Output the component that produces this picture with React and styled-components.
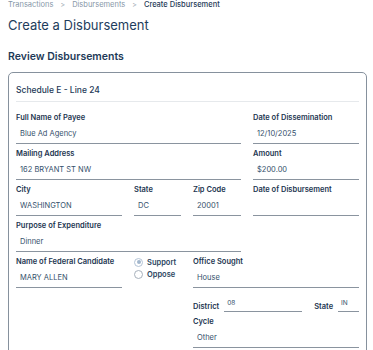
import React from "react";
import styled, { createGlobalStyle } from "styled-components";

const GlobalStyle = createGlobalStyle`
  body {
    margin: 0;
    background: #ffffff;
    font-family: Inter, "Noto Sans", sans-serif;
    color: #1c3550;
  }
`;

const Page = styled.div`
  padding: 0 6px 0 8px;
  height: 350px;
  overflow: hidden;
`;

const Crumbs = styled.nav`
  display: flex;
  align-items: center;
  font-size: 7.5px;
  line-height: 10px;
  color: #8797a8;
`;

const Crumb = styled.span`
  color: ${(p) => (p.$current ? "#1f3b58" : "#8797a8")};
  font-weight: ${(p) => (p.$current ? 500 : 400)};
`;

const Sep = styled.span`
  margin: 0 7px;
  font-size: 7px;
  color: #8d9aa8;
`;

const Title = styled.h1`
  margin: 7px 0 0;
  font-size: 13px;
  line-height: 16px;
  font-weight: 400;
  color: #1e3d5c;
`;

const SubTitle = styled.h2`
  margin: 17px 0 0;
  font-size: 10.5px;
  line-height: 14px;
  font-weight: 600;
  color: #1e3a57;
`;

const Card = styled.section`
  margin-top: 8px;
  border: 1px solid #86919d;
  border-radius: 5px;
  padding: 0 7px;
  height: 400px;
`;

const CardHead = styled.div`
  padding: 11px 0 5px;
  font-size: 8.5px;
  line-height: 12px;
  font-weight: 500;
  color: #1e3a57;
  border-bottom: 1px solid #e6e9ec;
`;

const Grid = styled.div`
  margin-top: 10px;
  display: grid;
  grid-template-columns: 106px 47px 48px 106px;
  column-gap: 12px;
  row-gap: 4px;
`;

const Field = styled.div`
  display: flex;
  flex-direction: column;
  grid-column: ${(p) => p.$span || "auto"};
`;

const Label = styled.label`
  font-size: 7.5px;
  line-height: 12px;
  font-weight: 600;
  color: #1c3550;
  white-space: nowrap;
`;

const Value = styled.div`
  height: 19px;
  border-bottom: 1px solid #8a949f;
  padding-left: 4px;
  display: flex;
  align-items: center;
  font-size: 7.5px;
  color: #34506b;
`;

const RadioGroup = styled.div`
  display: flex;
  flex-direction: column;
`;

const RadioOption = styled.div`
  display: flex;
  align-items: center;
  height: 12px;
  gap: 4px;
  font-size: 7.5px;
  font-weight: 600;
  color: #2a4560;
`;

const RadioDot = styled.span`
  width: 7px;
  height: 7px;
  border-radius: 50%;
  border: 1px solid ${(p) => (p.$checked ? "#b4c4d6" : "#a7b1bc")};
  background: #fff;
  display: flex;
  align-items: center;
  justify-content: center;
  &::after {
    content: "";
    width: 4px;
    height: 4px;
    border-radius: 50%;
    background: ${(p) => (p.$checked ? "#a3b7cd" : "transparent")};
  }
`;

const InlineRow = styled.div`
  grid-column: 3 / 5;
  display: flex;
  align-items: flex-end;
  padding-top: 5px;
`;

const InlineLabel = styled.span`
  font-size: 7.5px;
  line-height: 10px;
  font-weight: 600;
  color: #1c3550;
  margin-right: 5px;
`;

const InlineInput = styled.div`
  flex: ${(p) => (p.$width ? "none" : 1)};
  width: ${(p) => (p.$width ? `${p.$width}px` : "auto")};
  height: 15px;
  border-bottom: 1px solid #8a949f;
  padding: 1px 0 0 3px;
  box-sizing: border-box;
  font-size: 6.5px;
  line-height: 10px;
  color: #34506b;
  margin-right: ${(p) => (p.$gap ? `${p.$gap}px` : "0")};
`;

const fields = [
  { label: "Full Name of Payee", value: "Blue Ad Agency", span: "1 / 4" },
  { label: "Date of Dissemination", value: "12/10/2025", span: "4 / 5" },
  { label: "Mailing Address", value: "162 BRYANT ST NW", span: "1 / 4" },
  { label: "Amount", value: "$200.00", span: "4 / 5" },
  { label: "City", value: "WASHINGTON" },
  { label: "State", value: "DC" },
  { label: "Zip Code", value: "20001" },
  { label: "Date of Disbursement", value: "" },
  { label: "Purpose of Expenditure", value: "Dinner", span: "1 / 4" },
];

export default function App() {
  return (
    <Page>
      <GlobalStyle />
      <Crumbs>
        <Crumb>Transactions</Crumb>
        <Sep>&gt;</Sep>
        <Crumb>Disbursements</Crumb>
        <Sep>&gt;</Sep>
        <Crumb $current>Create Disbursement</Crumb>
      </Crumbs>
      <Title>Create a Disbursement</Title>
      <SubTitle>Review Disbursements</SubTitle>
      <Card>
        <CardHead>Schedule E - Line 24</CardHead>
        <Grid>
          {fields.map((f) => (
            <Field key={f.label} $span={f.span}>
              <Label>{f.label}</Label>
              <Value>{f.value}</Value>
            </Field>
          ))}
          <Field $span="4 / 5" />

          <Field $span="1 / 2">
            <Label>Name of Federal Candidate</Label>
            <Value>MARY ALLEN</Value>
          </Field>
          <RadioGroup>
            <RadioOption>
              <RadioDot $checked />
              Support
            </RadioOption>
            <RadioOption>
              <RadioDot />
              Oppose
            </RadioOption>
          </RadioGroup>
          <Field $span="3 / 5">
            <Label>Office Sought</Label>
            <Value>House</Value>
          </Field>

          <InlineRow>
            <InlineLabel>District</InlineLabel>
            <InlineInput $width={78} $gap={12}>08</InlineInput>
            <InlineLabel>State</InlineLabel>
            <InlineInput>IN</InlineInput>
          </InlineRow>

          <Field $span="3 / 5">
            <Label>Cycle</Label>
            <Value>Other</Value>
          </Field>
        </Grid>
      </Card>
    </Page>
  );
}
